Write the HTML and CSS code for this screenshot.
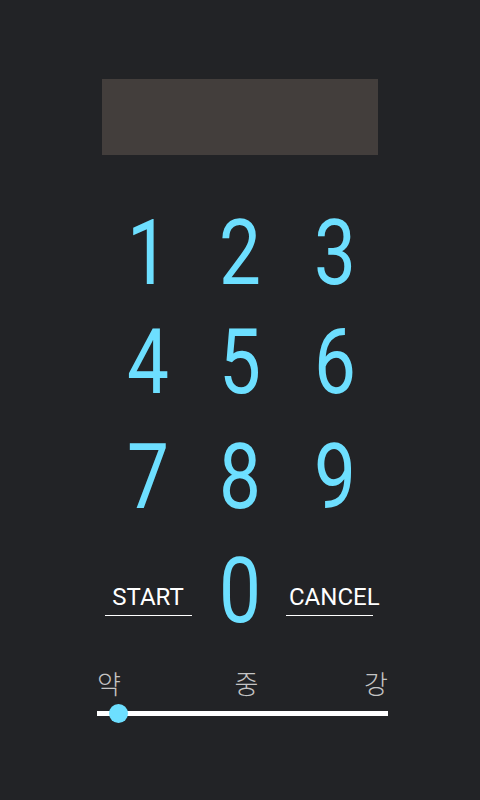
FILE: index.html
```html
<!DOCTYPE html>
<html lang="ko">
<head>
<meta charset="utf-8">
<link rel="stylesheet" href="styles.css">
</head>
<body>
<div class="screen">
  <div class="display"></div>
  <div class="keypad">
    <div class="key">1</div><div class="key">2</div><div class="key">3</div>
    <div class="key">4</div><div class="key">5</div><div class="key">6</div>
    <div class="key">7</div><div class="key">8</div><div class="key">9</div>
    <div class="cell"><span class="action">START</span></div>
    <div class="key">0</div>
    <div class="cell cell-end"><span class="action action-cancel">CANCEL</span></div>
  </div>
  <div class="power">
    <div class="labels"><span>약</span><span class="mid">중</span><span>강</span></div>
    <div class="track"><span class="thumb"></span></div>
  </div>
</div>
</body>
</html>
```

FILE: styles.css
```css
html, body {
  margin: 0;
  padding: 0;
  background: #222326;
}
.screen {
  width: 480px;
  height: 800px;
  padding-top: 79px;
  box-sizing: border-box;
  background: #222326;
}
.display {
  width: 276px;
  height: 76px;
  margin: 0 auto;
  background: #433e3c;
}
.keypad {
  width: 282px;
  margin: 42px 0 0 102px;
  display: grid;
  grid-template-columns: 92px 92px 98px;
  grid-template-rows: 109px 115px 114px 112px;
}
.key {
  font-family: Roboto, "Liberation Sans", sans-serif;
  font-weight: 400;
  font-size: 91px;
  line-height: 112px;
  height: 112px;
  color: #6ddfff;
  text-align: center;
  transform: scaleX(0.82);
}
.cell {
  display: flex;
  justify-content: center;
  padding-top: 48px;
}
.cell-end {
  justify-content: flex-start;
}
.action {
  display: block;
  width: 87px;
  font-family: Roboto, "Liberation Sans", sans-serif;
  font-size: 24px;
  line-height: 28px;
  color: #ffffff;
  text-align: center;
  white-space: nowrap;
  padding-bottom: 4px;
  border-bottom: 1px solid #ffffff;
  height: 28px;
}
.action-cancel {
  width: 84px;
  padding-left: 3px;
  text-align: left;
}
.power {
  width: 291px;
  margin: 21px 0 0 97px;
}
.labels {
  display: flex;
  justify-content: space-between;
  font-family: "Noto Sans CJK KR", sans-serif;
  font-weight: 300;
  font-size: 26px;
  line-height: 30px;
  color: #c4c4c4;
}
.labels .mid {
  margin-left: 8px;
}
.track {
  position: relative;
  height: 5px;
  margin-top: 13px;
  background: #ffffff;
}
.thumb {
  position: absolute;
  left: 12px;
  top: -7px;
  width: 19px;
  height: 19px;
  border-radius: 50%;
  background: #6ddfff;
}
```
